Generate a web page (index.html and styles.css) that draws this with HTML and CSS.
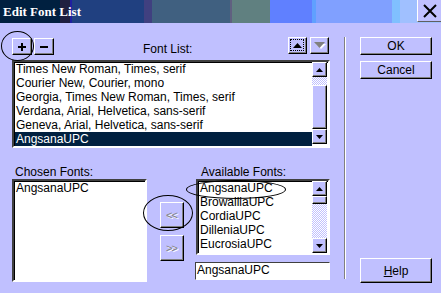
FILE: index.html
```html
<!DOCTYPE html>
<html>
<head>
<meta charset="utf-8">
<link rel="stylesheet" href="styles.css">
</head>
<body>
<div class="titlebar">
  <span class="title">Edit Font List</span>
  <span class="close"><svg width="16" height="14" viewBox="0 0 16 14"><path d="M2 1 L14 13 M14 1 L2 13" stroke="#000" stroke-width="2"/></svg></span>
</div>
<div class="main">
  <div class="left">
    <div class="toolrow">
      <button class="btn sq"><svg width="10" height="10" viewBox="0 0 10 10"><path d="M5 1 V9 M1 5 H9" stroke="#000" stroke-width="2"/></svg></button>
      <button class="btn sq"><svg width="10" height="10" viewBox="0 0 10 10"><path d="M1 5 H9" stroke="#000" stroke-width="2"/></svg></button>
      <span class="label fl">Font List:</span>
      <button class="btn arr focus"><svg width="9" height="5" viewBox="0 0 9 5"><path d="M4.5 0 L9 5 H0 Z" fill="#000"/></svg></button>
      <button class="btn arr dis"><svg width="12" height="7" viewBox="0 0 12 7"><path d="M1 1 H11 L6 6 Z" fill="#fff" transform="translate(1,1)"/><path d="M0 0 H11 L5.5 6 Z" fill="#808080"/></svg></button>
    </div>
    <div class="listbox fontlist">
      <div class="items">
        <div class="item">Times New Roman, Times, serif</div>
        <div class="item">Courier New, Courier, mono</div>
        <div class="item">Georgia, Times New Roman, Times, serif</div>
        <div class="item">Verdana, Arial, Helvetica, sans-serif</div>
        <div class="item">Geneva, Arial, Helvetica, sans-serif</div>
        <div class="item sel">AngsanaUPC</div>
      </div>
      <div class="sb">
        <div class="sbtn"><svg width="7" height="4" viewBox="0 0 7 4"><path d="M3.5 0 L7 4 H0 Z" fill="#000"/></svg></div>
        <div class="track t1"></div>
        <div class="thumb th1"></div>
        <div class="sbtn"><svg width="7" height="4" viewBox="0 0 7 4"><path d="M0 0 H7 L3.5 4 Z" fill="#000"/></svg></div>
      </div>
    </div>
    <div class="lower">
      <div class="col chosen">
        <span class="label">Chosen Fonts:</span>
        <div class="listbox chosenlist">
          <div class="items"><div class="item">AngsanaUPC</div></div>
        </div>
      </div>
      <div class="col mid">
        <button class="btn mv">&lt;&lt;</button>
        <button class="btn mv">&gt;&gt;</button>
      </div>
      <div class="col avail">
        <span class="label">Available Fonts:</span>
        <div class="listbox availlist">
          <div class="items">
            <div class="item">AngsanaUPC</div>
            <div class="item">BrowalliaUPC</div>
            <div class="item">CordiaUPC</div>
            <div class="item">DilleniaUPC</div>
            <div class="item">EucrosiaUPC</div>
          </div>
          <div class="sb">
            <div class="sbtn"><svg width="7" height="4" viewBox="0 0 7 4"><path d="M3.5 0 L7 4 H0 Z" fill="#000"/></svg></div>
            <div class="thumb th2"></div>
            <div class="track t2"></div>
            <div class="sbtn"><svg width="7" height="4" viewBox="0 0 7 4"><path d="M0 0 H7 L3.5 4 Z" fill="#000"/></svg></div>
          </div>
        </div>
        <div class="textfield">AngsanaUPC</div>
      </div>
    </div>
  </div>
  <div class="sep"></div>
  <div class="right">
    <button class="btn act">OK</button>
    <button class="btn act">Cancel</button>
    <button class="btn act help"><u>H</u>elp</button>
  </div>
</div>
<div class="ring r1"></div>
<div class="ring r2"></div>
<div class="ring r3"></div>
</body>
</html>
```
FILE: styles.css
```css
* { box-sizing: border-box; }
html, body { margin: 0; padding: 0; }
body {
  width: 441px;
  height: 293px;
  background: #c0c0ff;
  font-family: "Liberation Sans", Arial, sans-serif;
  font-size: 12px;
  color: #000;
  position: relative;
  overflow: hidden;
}
.titlebar {
  height: 23px;
  display: flex;
  align-items: center;
  background: linear-gradient(to right,
    #002040 0, #002040 60px, #202040 60px, #202040 70px, #2020a0 70px, #2020a0 72px,
    #204080 72px, #204080 144px, #404080 144px, #404080 152px,
    #406080 152px, #406080 230px, #606080 230px, #606080 232px,
    #608080 232px, #608080 270px, #6080ff 270px, #6080ff 312px,
    #60a0ff 312px, #60a0ff 316px, #80a0ff 316px, #80a0ff 392px,
    #80c0ff 392px, #80c0ff 400px, #a0c0ff 400px, #a0c0ff 417px);
}
.title {
  font-family: "Liberation Serif", "Times New Roman", serif;
  font-weight: bold;
  font-size: 13px;
  color: #fff;
  padding-left: 3px;
  padding-top: 1px;
  flex: 1;
}
.close {
  width: 24px;
  height: 22px;
  align-self: flex-start;
  background: #c0c0ff;
  border-left: 1px solid #fff;
  border-bottom: 1px solid #606060;
  display: flex;
  align-items: center;
  justify-content: center;
}
.main {
  display: flex;
  padding: 14px 0 0 12px;
}
.left { width: 318px; }
.toolrow {
  display: flex;
  height: 18px;
  align-items: flex-start;
}
.btn {
  margin: 0;
  padding: 0;
  font: inherit;
  color: #000;
  background: #c0c0ff;
  border: 1px solid;
  border-color: #fff #000 #000 #fff;
  box-shadow: inset -1px -1px 0 #808080;
  display: flex;
  align-items: center;
  justify-content: center;
}
.sq { width: 20px; height: 17px; margin-right: 2px; margin-top: 1px; }
.fl { margin-left: 87px; align-self: flex-end; line-height: 14px; height: 14px; margin-bottom: -1px; }
.arr { width: 19px; height: 17px; margin-left: auto; }
.arr + .arr { margin-left: 3px; margin-right: 1px; }
.focus { position: relative; }
.focus::after {
  content: "";
  position: absolute;
  left: 1px; top: 1px; right: 2px; bottom: 2px;
  border: 1px dotted #000;
}
.label { display: block; line-height: 14px; }
.listbox {
  background: #fff;
  border: 2px solid;
  border-color: #404040 #fff #fff #404040;
  box-shadow: inset 1px 1px 0 #000;
  display: flex;
}
.items { flex: 1; padding-top: 0; padding-left: 1px; }
.item { height: 14px; line-height: 14px; white-space: nowrap; padding-left: 1px; }
.item.sel { background: #002040; color: #fff; }
.fontlist { margin-top: 5px; height: 88px; width: 318px; }
.sb { width: 15px; display: flex; flex-direction: column; margin-right: 1px; }
.sbtn, .thumb {
  background: #c0c0ff;
  border: 1px solid;
  border-color: #fff #000 #000 #fff;
  box-shadow: inset -1px -1px 0 #808080;
}
.sbtn { height: 15px; display: flex; align-items: center; justify-content: center; }
.track {
  background-color: #fff;
  background-image:
    linear-gradient(45deg, #c0c0ff 25%, transparent 25%, transparent 75%, #c0c0ff 75%),
    linear-gradient(45deg, #c0c0ff 25%, transparent 25%, transparent 75%, #c0c0ff 75%);
  background-size: 2px 2px;
  background-position: 0 0, 1px 1px;
}
.t1 { height: 8px; }
.th1 { height: 44px; }
.th2 { height: 8px; }
.t2 { flex: 1; }
.lower {
  display: flex;
  margin-top: 17px;
}
.col { display: flex; flex-direction: column; }
.chosen { width: 135px; }
.chosen .label { padding-left: 3px; }
.chosenlist { height: 103px; }
.mid { margin-left: 13px; width: 24px; padding-top: 37px; }
.mv {
  width: 24px;
  height: 26px;
  color: #808080;
  text-shadow: 1px 1px 0 #fff;
  font-size: 11px;
  letter-spacing: -1px;
  padding-right: 1px;
}
.mv + .mv { margin-top: 7px; }
.avail { margin-left: 12px; width: 134px; }
.avail .label { padding-left: 5px; }
.availlist { height: 76px; }
.textfield {
  margin-top: 7px;
  height: 18px;
  width: 135px;
  margin-left: -1px;
  background: #fff;
  border: 1px solid;
  border-color: #404040 #fff #fff #404040;
  line-height: 15px;
  padding-left: 1px;
}
.sep {
  margin-left: 14px;
  width: 2px;
  height: 242px;
  border-left: 1px solid #808080;
  border-right: 1px solid #fff;
}
.right {
  margin-left: 14px;
  width: 72px;
  height: 246px;
  display: flex;
  flex-direction: column;
}
.act { width: 72px; height: 18px; }
.act + .act { margin-top: 6px; }
.help { margin-top: auto !important; height: 25px; }
.ring {
  position: absolute;
  border: 1px solid #000;
  border-radius: 50%;
}
.r1 { left: 1px; top: 31px; width: 33px; height: 30px; }
.r2 { left: 143px; top: 195px; width: 50px; height: 36px; }
.r3 { left: 186px; top: 180px; width: 100px; height: 19px; }
```
